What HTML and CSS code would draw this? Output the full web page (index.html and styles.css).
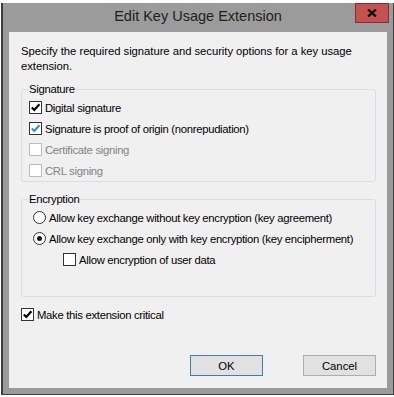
FILE: index.html
```html
<!DOCTYPE html>
<html lang="en">
<head>
  <meta charset="UTF-8">
  <title>Edit Key Usage Extension</title>
  <link rel="stylesheet" href="styles.css">
</head>
<body>
  <div class="window">
    <div class="titlebar">
      <div class="title">Edit Key Usage Extension</div>
      <button class="close" type="button">
        <svg width="10" height="8" viewBox="0 0 10 8"><path d="M1 0.5 L9 7.5 M9 0.5 L1 7.5" stroke="#000" stroke-width="2.2" fill="none"/></svg>
      </button>
    </div>

    <div class="client">
      <p class="intro">Specify the required signature and security options for a key usage extension.</p>

      <fieldset class="group signature">
        <legend>Signature</legend>
        <label class="option">
          <span class="box"><svg width="11" height="11" viewBox="0 0 11 11"><path d="M1.8 5.4 L4.3 8 L9.4 2.2" stroke="#000" stroke-width="2.2" fill="none"/></svg></span>
          Digital signature
        </label>
        <label class="option">
          <span class="box"><svg width="11" height="11" viewBox="0 0 11 11"><path d="M1.8 5.4 L4.3 8 L9.4 2.2" stroke="#3a8fd9" stroke-width="2.2" fill="none"/></svg></span>
          Signature is proof of origin (nonrepudiation)
        </label>
        <label class="option disabled">
          <span class="box"></span>
          Certificate signing
        </label>
        <label class="option disabled">
          <span class="box"></span>
          CRL signing
        </label>
      </fieldset>

      <fieldset class="group encryption">
        <legend>Encryption</legend>
        <label class="option radio-row">
          <span class="radio"></span>
          Allow key exchange without key encryption (key agreement)
        </label>
        <label class="option radio-row">
          <span class="radio on"></span>
          Allow key exchange only with key encryption (key encipherment)
        </label>
        <label class="option sub">
          <span class="box"></span>
          Allow encryption of user data
        </label>
      </fieldset>

      <label class="option critical">
        <span class="box"><svg width="11" height="11" viewBox="0 0 11 11"><path d="M1.8 5.4 L4.3 8 L9.4 2.2" stroke="#000" stroke-width="2.2" fill="none"/></svg></span>
        Make this extension critical
      </label>

      <div class="actions">
        <button class="btn default" type="button">OK</button>
        <button class="btn" type="button">Cancel</button>
      </div>
    </div>
  </div>
</body>
</html>
```

FILE: styles.css
```css
* {
  box-sizing: border-box;
}

body {
  margin: 0;
  background: #fff;
  font-family: "Liberation Sans", Arial, sans-serif;
  font-size: 11.3px;
  color: #000;
}

.window {
  margin: 3px 0 0 1px;
  width: 393px;
  background: #9b9b9b;
  border: solid #3f3f3f;
  border-width: 0 1px 1px 2px;
}

.titlebar {
  display: grid;
  grid-template-columns: 1fr auto 1fr;
  height: 29px;
}

.title {
  grid-column: 2;
  font-size: 14.5px;
  line-height: 26px;
  color: #1e1e1e;
  white-space: nowrap;
}

.close {
  grid-column: 3;
  justify-self: end;
  width: 34px;
  height: 20px;
  margin-right: 4px;
  padding: 0;
  background: #c75050;
  border: 1px solid #7a3535;
  display: flex;
  align-items: center;
  justify-content: center;
}

.client {
  margin: 0 6px 6px;
  height: 356px;
  background: #f0f0f0;
  padding: 12px 11px 12px 12px;
  display: flex;
  flex-direction: column;
}

.intro {
  margin: 0;
  line-height: 15px;
  letter-spacing: -0.05px;
}

.group {
  margin: 8px 0 0;
  padding: 0 8px 0 7px;
  border: 1px solid #d8dde1;
  border-radius: 3px;
}

.group legend {
  padding: 0 1px;
  margin-left: -1px;
  line-height: 15px;
  letter-spacing: -0.3px;
}

.encryption {
  margin-top: 10px;
  padding-bottom: 26px;
}

.option {
  display: flex;
  align-items: center;
  gap: 3px;
  height: 21px;
  white-space: nowrap;
  letter-spacing: -0.3px;
}

.box {
  width: 13px;
  height: 13px;
  border: 1px solid #333;
  background: #fff;
  display: flex;
  flex-shrink: 0;
}

.option.disabled {
  color: #838383;
}

.disabled .box {
  border-color: #bcbcbc;
}

.radio-row {
  padding-left: 4px;
}

.radio {
  width: 13px;
  height: 13px;
  border: 1px solid #333;
  border-radius: 50%;
  background: #fff;
  display: flex;
  align-items: center;
  justify-content: center;
  flex-shrink: 0;
}

.radio.on::after {
  content: "";
  width: 5px;
  height: 5px;
  border-radius: 50%;
  background: #1a1a1a;
}

.sub {
  padding-left: 34px;
}

.critical {
  margin-top: 7px;
}

.actions {
  margin-top: auto;
  display: flex;
  justify-content: flex-end;
  gap: 40px;
}

.btn {
  width: 73px;
  height: 21px;
  padding: 0;
  background: #e1e1e1;
  border: 1px solid #adadad;
  font: inherit;
  color: #000;
}

.btn.default {
  border-color: #3c7fb1;
}
```
